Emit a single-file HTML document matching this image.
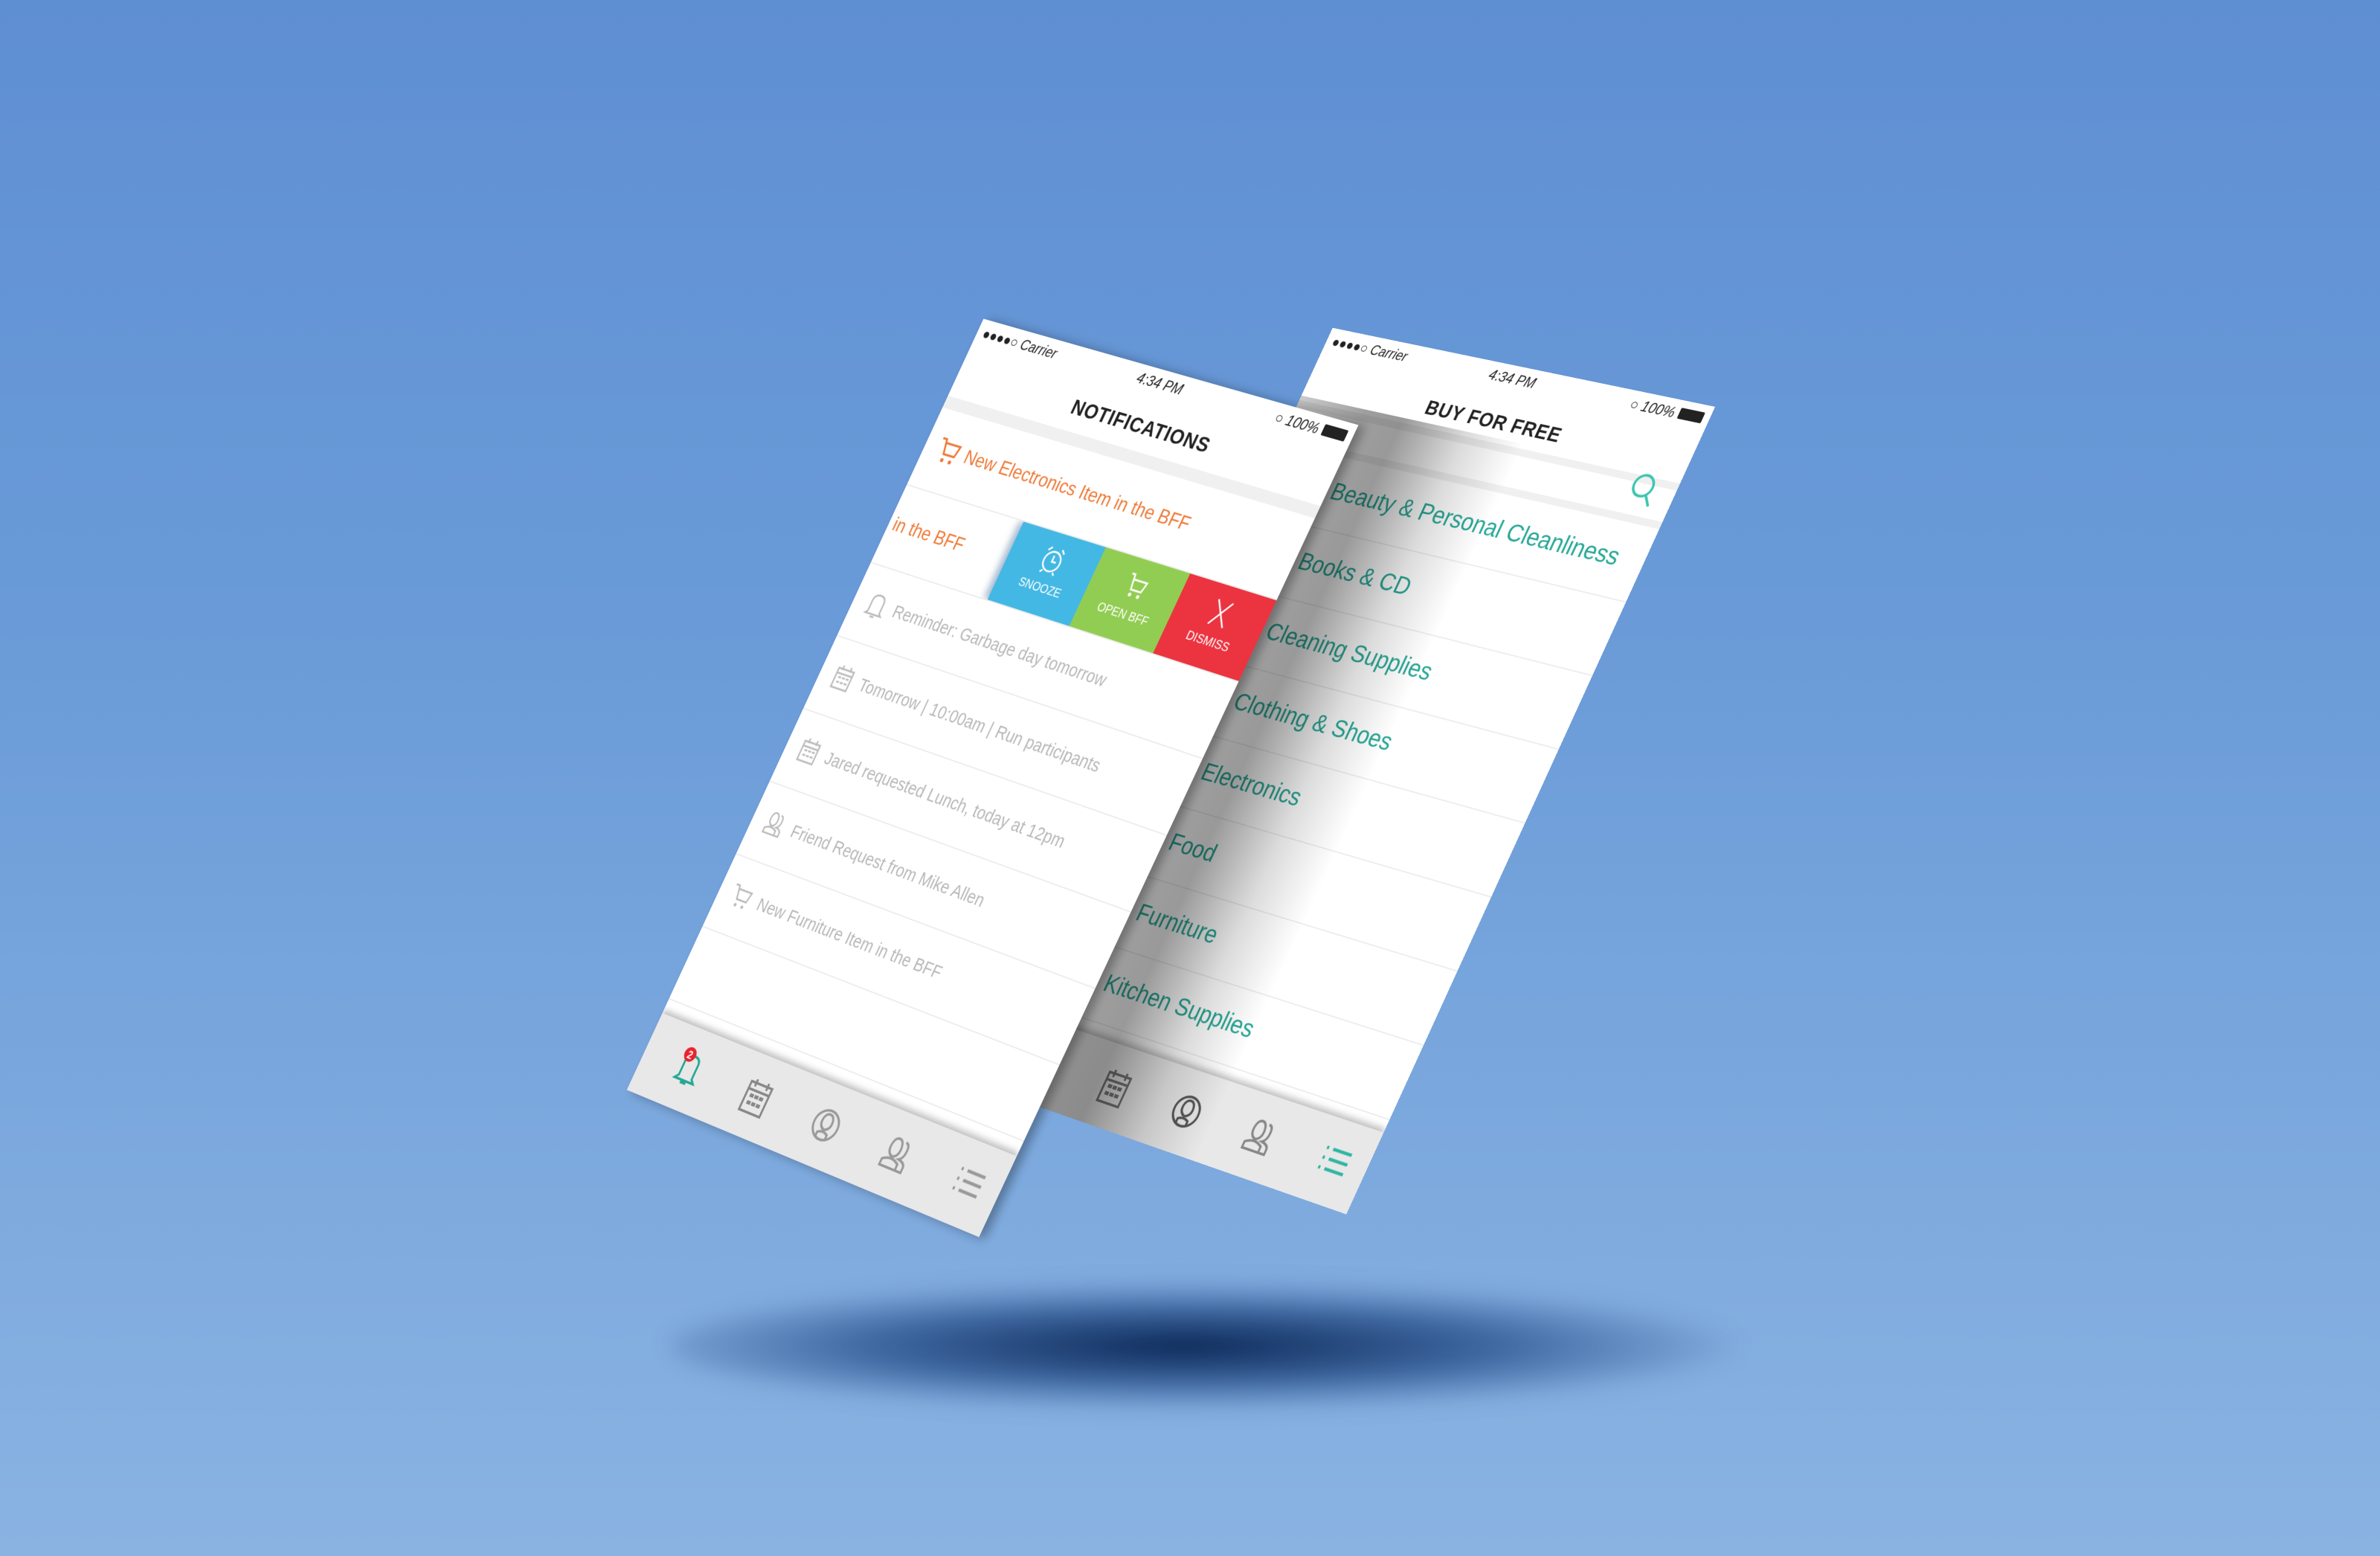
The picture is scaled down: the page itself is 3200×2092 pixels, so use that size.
<!DOCTYPE html>
<html><head><meta charset="utf-8"><style>
html,body{margin:0;padding:0}
body{width:3200px;height:2092px;overflow:hidden;position:relative;background:linear-gradient(180deg,#5f8fd3 0%,#6a9bd8 40%,#8ab3e2 100%);font-family:"Liberation Sans",sans-serif}
.shadow{position:absolute;left:900px;top:1725px;width:1440px;height:170px;border-radius:50%;background:radial-gradient(ellipse at 48% 50%,rgba(10,38,85,1) 0%,rgba(25,65,125,0.65) 40%,rgba(60,110,180,0) 72%);filter:blur(14px)}
.phone{position:absolute;left:0;top:0;width:375px;height:667px;transform-origin:0 0;background:#fff;overflow:hidden}
.sb{position:absolute;left:0;top:0;width:375px;height:20px;font-size:12px;color:#222;font-style:italic}
.sb .l{position:absolute;left:6px;top:4px;letter-spacing:0}
.sb .c{position:absolute;left:0;width:375px;text-align:center;top:4px}
.sb .r{position:absolute;right:32px;top:4px}
.bat{position:absolute;right:6px;top:6px;width:22px;height:9px;background:#222;border-radius:1px}
.title{position:absolute;left:0;width:375px;top:36px;text-align:center;font-weight:bold;font-size:17px;letter-spacing:0.5px;color:#222}
.band{position:absolute;left:0;width:375px;height:8px;background:#f0f0f0}
.row{position:absolute;left:0;width:375px;border-bottom:1px solid #ececec;overflow:hidden}
.orange{color:#ef7a38;font-size:16px;white-space:nowrap}
.gray{color:#b8b8b8;font-size:14.5px;white-space:nowrap}
.teal{color:#27a896;font-size:20.5px;white-space:nowrap}
.tab{position:absolute;left:0;top:600px;width:375px;height:67px;background:#e8e8e8;box-shadow:0 -3px 5px rgba(0,0,0,0.25)}
.ic{position:absolute}
</style></head><body>
<div class="shadow"></div>

<!-- RIGHT PHONE -->
<div class="phone" style="transform:matrix3d(1.01064,0.19744,0,-0.00015644,-0.72538,1.50930,0,-0.000014092,0,0,1,0,1791.8,440.8,0,1)">
 <div class="sb"><span class="l">●●●●○ Carrier</span><span class="c">4:34 PM</span><span class="r">○ 100%</span><div class="bat"></div></div>
 <div class="title" style="top:38px">BUY FOR FREE</div>
 <div class="band" style="top:64px;height:6px"></div>
 <svg class="ic" style="left:333px;top:60px" width="28" height="30" viewBox="0 0 26 28"><circle cx="11" cy="11" r="8" fill="none" stroke="#3cc3b0" stroke-width="2"/><path d="M16 17 L22 25" stroke="#3cc3b0" stroke-width="2"/></svg>
 <div class="band" style="top:96px;height:6px"></div>
 <div class="row" style="top:102px;height:60px"><div class="teal" style="position:absolute;left:70px;top:17px">Beauty &amp; Personal Cleanliness</div></div>
 <div class="row" style="top:163px;height:60px"><div class="teal" style="position:absolute;left:70px;top:17px">Books &amp; CD</div></div>
 <div class="row" style="top:224px;height:60px"><div class="teal" style="position:absolute;left:70px;top:17px">Cleaning Supplies</div></div>
 <div class="row" style="top:285px;height:60px"><div class="teal" style="position:absolute;left:70px;top:17px">Clothing &amp; Shoes</div></div>
 <div class="row" style="top:346px;height:60px"><div class="teal" style="position:absolute;left:70px;top:17px">Electronics</div></div>
 <div class="row" style="top:407px;height:60px"><div class="teal" style="position:absolute;left:70px;top:17px">Food</div></div>
 <div class="row" style="top:468px;height:60px"><div class="teal" style="position:absolute;left:70px;top:17px">Furniture</div></div>
 <div class="row" style="top:529px;height:60px"><div class="teal" style="position:absolute;left:70px;top:17px">Kitchen Supplies</div></div>
 <div class="tab">
  <svg class="ic" style="left:108px;top:18px" width="30" height="32" viewBox="0 0 30 32"><rect x="4" y="5" width="22" height="24" fill="none" stroke="#777" stroke-width="2"/><path d="M4 11H26M9 2V8M21 2V8" stroke="#777" stroke-width="2"/><g fill="#777"><rect x="8" y="14" width="4" height="3"/><rect x="13" y="14" width="4" height="3"/><rect x="18" y="14" width="4" height="3"/><rect x="8" y="20" width="4" height="3"/><rect x="13" y="20" width="4" height="3"/><rect x="18" y="20" width="4" height="3"/></g></svg>
  <svg class="ic" style="left:182px;top:18px" width="30" height="30" viewBox="0 0 30 30"><circle cx="15" cy="15" r="12" fill="none" stroke="#555" stroke-width="2"/><path d="M10 26 V22 Q15 19 20 22 V26 M15 19 Q9 17 10 11 Q11 6 15 6 Q19 6 20 11 Q21 17 15 19" fill="none" stroke="#555" stroke-width="2"/></svg>
  <svg class="ic" style="left:256px;top:18px" width="32" height="30" viewBox="0 0 32 30"><path d="M4 27 V22 Q12 17 20 22 V27 Z M12 18 Q6 16 7 9 Q8 3 12 3 Q16 3 17 9 Q18 16 12 18 M19 4 Q23 4 23 10 Q23 16 19 18 Q26 19 26 23 V27 H21" fill="none" stroke="#888" stroke-width="2"/></svg>
  <svg class="ic" style="left:330px;top:20px" width="30" height="26" viewBox="0 0 30 26"><path d="M3 4H5M9 4H27M3 12H5M9 12H27M3 20H5M9 20H27" stroke="#2fb5a2" stroke-width="2.5"/></svg>
 </div>
 <div style="position:absolute;left:0;top:60px;width:375px;height:607px;background:linear-gradient(90deg,rgba(0,0,0,0.2) 0%,rgba(0,0,0,0.38) 18%,rgba(0,0,0,0.4) 28%,rgba(0,0,0,0.14) 45%,rgba(0,0,0,0) 60%)"></div>
</div>

<!-- LEFT PHONE -->
<div class="phone" style="box-shadow:6px 0 8px rgba(0,0,0,0.3);transform:matrix3d(1.09083,0.30165,0,-0.00013874,-0.70817,1.57316,0,0.000012884,0,0,1,0,1322.4,428.6,0,1)">
 <div class="sb"><span class="l">●●●●○ Carrier</span><span class="c">4:34 PM</span><span class="r">○ 100%</span><div class="bat"></div></div>
 <div class="title" style="top:37px">NOTIFICATIONS</div>
 <div class="band" style="top:66px;height:10px"></div>
 <div class="row" style="top:76px;height:66px">
  <svg class="ic" style="left:12px;top:20px" width="24" height="24" viewBox="0 0 24 24"><path d="M2 3H6L9 15H20L22 6H7" fill="none" stroke="#ef7a38" stroke-width="1.8"/><circle cx="10" cy="20" r="1.6" fill="#ef7a38"/><circle cx="18" cy="20" r="1.6" fill="#ef7a38"/></svg>
  <div class="orange" style="position:absolute;left:42px;top:24px">New Electronics Item in the BFF</div>
 </div>
 <div class="row" style="top:143px;height:66px">
  <div class="orange" style="position:absolute;left:-150px;top:24px">New Electronics Item in the BFF</div>
  <div style="position:absolute;left:123px;top:0;width:84px;height:66px;background:#43b8e4;box-shadow:-4px 0 6px rgba(0,60,120,0.35)"></div>
  <div style="position:absolute;left:207px;top:0;width:84px;height:66px;background:#92cd53"></div>
  <div style="position:absolute;left:291px;top:0;width:84px;height:66px;background:#ec3340"></div>
  <svg class="ic" style="left:154px;top:10px" width="22" height="24" viewBox="0 0 22 24"><circle cx="11" cy="13" r="8" fill="none" stroke="#fff" stroke-width="1.5"/><path d="M11 8V13H15M3 5L6 2M19 5L16 2M6 21L4 23M16 21L18 23" stroke="#fff" stroke-width="1.5" fill="none"/></svg>
  <div style="position:absolute;left:123px;width:84px;top:40px;text-align:center;color:#fff;font-size:10px">SNOOZE</div>
  <svg class="ic" style="left:238px;top:10px" width="22" height="24" viewBox="0 0 22 24"><path d="M3 3H6L8 15H18L20 7H7" fill="none" stroke="#fff" stroke-width="1.5"/><circle cx="9" cy="19" r="1.5" fill="#fff"/><circle cx="17" cy="19" r="1.5" fill="#fff"/></svg>
  <div style="position:absolute;left:207px;width:84px;top:40px;text-align:center;color:#fff;font-size:10px">OPEN BFF</div>
  <svg class="ic" style="left:322px;top:10px" width="22" height="24" viewBox="0 0 22 24"><path d="M4 2L18 22M18 2L4 22" stroke="#fff" stroke-width="1.5"/></svg>
  <div style="position:absolute;left:291px;width:84px;top:40px;text-align:center;color:#fff;font-size:10px">DISMISS</div>
 </div>
 <div class="row" style="top:210px;height:62px">
  <svg class="ic" style="left:14px;top:20px" width="20" height="22" viewBox="0 0 20 22"><path d="M4 16V8Q4 2 10 2Q16 2 16 8V16L18 18H2Z M8 20H12" fill="none" stroke="#bbb" stroke-width="1.5"/></svg>
  <div class="gray" style="position:absolute;left:42px;top:23px">Reminder: Garbage day tomorrow</div></div>
 <div class="row" style="top:273px;height:62px">
  <svg class="ic" style="left:14px;top:19px" width="20" height="22" viewBox="0 0 20 22"><rect x="2" y="4" width="16" height="16" fill="none" stroke="#bbb" stroke-width="1.5"/><path d="M2 8H18M6 1V5M14 1V5M5 11H8M9 11H12M13 11H16M5 15H8M9 15H12M13 15H16" stroke="#bbb" stroke-width="1.5"/></svg>
  <div class="gray" style="position:absolute;left:42px;top:23px">Tomorrow | 10:00am | Run participants</div></div>
 <div class="row" style="top:336px;height:62px">
  <svg class="ic" style="left:14px;top:19px" width="20" height="22" viewBox="0 0 20 22"><rect x="2" y="4" width="16" height="16" fill="none" stroke="#bbb" stroke-width="1.5"/><path d="M2 8H18M6 1V5M14 1V5M5 11H8M9 11H12M13 11H16M5 15H8M9 15H12M13 15H16" stroke="#bbb" stroke-width="1.5"/></svg>
  <div class="gray" style="position:absolute;left:42px;top:23px">Jared requested Lunch, today at 12pm</div></div>
 <div class="row" style="top:399px;height:62px">
  <svg class="ic" style="left:12px;top:19px" width="24" height="22" viewBox="0 0 32 30"><path d="M4 27 V22 Q12 17 20 22 V27 Z M12 18 Q6 16 7 9 Q8 3 12 3 Q16 3 17 9 Q18 16 12 18 M19 4 Q23 4 23 10 Q23 16 19 18 Q26 19 26 23 V27 H21" fill="none" stroke="#bbb" stroke-width="2"/></svg>
  <div class="gray" style="position:absolute;left:42px;top:23px">Friend Request from Mike Allen</div></div>
 <div class="row" style="top:462px;height:62px">
  <svg class="ic" style="left:12px;top:19px" width="22" height="22" viewBox="0 0 24 24"><path d="M2 3H6L9 15H20L22 6H7" fill="none" stroke="#bbb" stroke-width="1.6"/><circle cx="10" cy="20" r="1.5" fill="#bbb"/><circle cx="18" cy="20" r="1.5" fill="#bbb"/></svg>
  <div class="gray" style="position:absolute;left:42px;top:23px">New Furniture Item in the BFF</div></div>
 <div class="row" style="top:525px;height:62px"></div>
 <div class="tab">
  <svg class="ic" style="left:34px;top:14px" width="30" height="34" viewBox="0 0 30 34"><path d="M8 26V14Q8 8 15 8Q22 8 22 14V26L25 29H5Z M12 31H18" fill="none" stroke="#26a894" stroke-width="2"/><circle cx="10" cy="8" r="6" fill="#e8232f"/><text x="10" y="11.5" font-size="9" font-weight="bold" fill="#fff" text-anchor="middle" font-family="Liberation Sans">2</text></svg>
  <svg class="ic" style="left:108px;top:18px" width="30" height="32" viewBox="0 0 30 32"><rect x="4" y="5" width="22" height="24" fill="none" stroke="#888" stroke-width="2"/><path d="M4 11H26M9 2V8M21 2V8" stroke="#888" stroke-width="2"/><g fill="#888"><rect x="8" y="14" width="4" height="3"/><rect x="13" y="14" width="4" height="3"/><rect x="18" y="14" width="4" height="3"/><rect x="8" y="20" width="4" height="3"/><rect x="13" y="20" width="4" height="3"/><rect x="18" y="20" width="4" height="3"/></g></svg>
  <svg class="ic" style="left:182px;top:18px" width="30" height="30" viewBox="0 0 30 30"><circle cx="15" cy="15" r="12" fill="none" stroke="#999" stroke-width="2"/><path d="M10 26 V22 Q15 19 20 22 V26 M15 19 Q9 17 10 11 Q11 6 15 6 Q19 6 20 11 Q21 17 15 19" fill="none" stroke="#999" stroke-width="2"/></svg>
  <svg class="ic" style="left:256px;top:18px" width="32" height="30" viewBox="0 0 32 30"><path d="M4 27 V22 Q12 17 20 22 V27 Z M12 18 Q6 16 7 9 Q8 3 12 3 Q16 3 17 9 Q18 16 12 18 M19 4 Q23 4 23 10 Q23 16 19 18 Q26 19 26 23 V27 H21" fill="none" stroke="#999" stroke-width="2"/></svg>
  <svg class="ic" style="left:330px;top:20px" width="30" height="26" viewBox="0 0 30 26"><path d="M3 4H5M9 4H27M3 12H5M9 12H27M3 20H5M9 20H27" stroke="#999" stroke-width="2.5"/></svg>
 </div>
</div>
</body></html>
